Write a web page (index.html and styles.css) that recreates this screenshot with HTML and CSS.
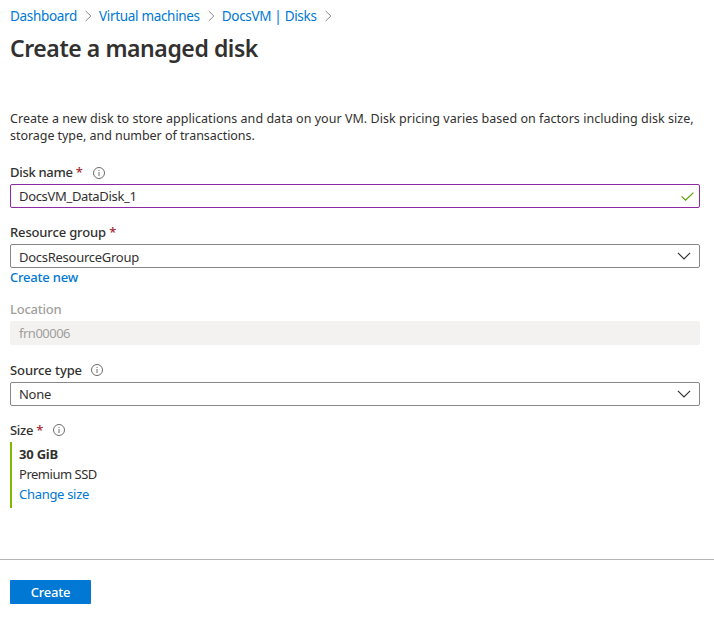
FILE: index.html
```html
<!DOCTYPE html>
<html lang="en">
<head>
<meta charset="utf-8">
<title>Create a managed disk</title>
<link rel="stylesheet" href="styles.css">
</head>
<body>
<svg class="defs" width="0" height="0" aria-hidden="true">
  <symbol id="sep" viewBox="0 0 7 12"><path d="M.7 1 5.9 6 .7 11"/></symbol>
  <symbol id="info" viewBox="0 0 12 12"><circle cx="6" cy="6" r="5.5"/><path d="M6 5v4M6 3v1"/></symbol>
  <symbol id="down" viewBox="0 0 14 8"><path d="M.9.8 7 6.9 13.1.8"/></symbol>
  <symbol id="check" viewBox="0 0 13 9"><path d="M.6 4.4 4.5 8.2 12.4.6"/></symbol>
</svg>
<main>
  <nav class="crumbs">
    <a>Dashboard</a><svg class="sep"><use href="#sep"/></svg>
    <a>Virtual machines</a><svg class="sep"><use href="#sep"/></svg>
    <a>DocsVM | Disks</a><svg class="sep"><use href="#sep"/></svg>
  </nav>
  <h1>Create a managed disk</h1>
  <p class="intro"><span class="lead">Create a new disk to store applications and data on your VM. Disk pricing varies based on factors including disk size,</span><br><span class="tail">storage type, and number of transactions.</span></p>
  <section class="field name">
    <div class="label">Disk name <b>*</b><svg class="info"><use href="#info"/></svg></div>
    <div class="box active"><span>DocsVM_DataDisk_1</span><svg class="check"><use href="#check"/></svg></div>
  </section>
  <section class="field group">
    <div class="label">Resource group <b>*</b></div>
    <div class="box"><span>DocsResourceGroup</span><svg class="down"><use href="#down"/></svg></div>
    <a class="new">Create new</a>
  </section>
  <section class="field location">
    <div class="label">Location</div>
    <div class="box disabled"><span>frn00006</span></div>
  </section>
  <section class="field source">
    <div class="label">Source type<svg class="info"><use href="#info"/></svg></div>
    <div class="box"><span>None</span><svg class="down"><use href="#down"/></svg></div>
  </section>
  <section class="field size">
    <div class="label">Size <b>*</b><svg class="info"><use href="#info"/></svg></div>
    <div class="summary"><strong>30 GiB</strong><span class="tier">Premium SSD</span><a>Change size</a></div>
  </section>
</main>
<footer><button>Create</button></footer>
</body>
</html>
```
FILE: styles.css
```css
* { box-sizing: border-box; }
body { margin: 0; height: 618px; display: flex; flex-direction: column; background: #fff; color: #323130; font: 13px/20px "Noto Sans", sans-serif; overflow: hidden; }
.defs { position: absolute; }
svg { fill: none; stroke: #6e6c6a; stroke-width: 1; flex: none; }
a { color: #0078d4; }
main { height: 559px; padding: 6px 14px 0 10px; }
.crumbs { display: flex; align-items: center; height: 20px; font-size: 13.5px; letter-spacing: -.32px; }
.sep { width: 7px; height: 12px; margin: 0 7px 0 8px; stroke: #8a8886; }
h1 { margin: 4px 0 0; font-size: 23px; line-height: 36px; font-weight: 600; letter-spacing: -.43px; }
.intro { margin: 44px 0 0; line-height: 17px; white-space: nowrap; font-size: 12.5px; }
.lead { letter-spacing: .037px; }
.tail { letter-spacing: -.05px; }
.field { display: flex; flex-direction: column; align-items: stretch; }
.label { display: flex; align-items: center; height: 20px; font-weight: 500; white-space: pre; letter-spacing: -.15px; }
.label b { color: #a4262c; font-weight: 500; }
.info { width: 12px; height: 12px; margin-left: 10px; }
.box { height: 24px; margin-top: 2px; border: 1px solid #8a8886; border-radius: 2px; display: flex; align-items: center; justify-content: space-between; padding: 0 8px; letter-spacing: -.27px; }
.active { border-color: #8e2aa5; letter-spacing: -.33px; }
.check { width: 13px; height: 9px; stroke: #57a300; stroke-width: 1.2; margin-right: -3px; }
.down { width: 14px; height: 8px; stroke: #323130; stroke-width: 1.15; }
.name { margin-top: 18px; }
.name .label { letter-spacing: -.3px; }
.name .info { margin-top: 1px; }
.group { margin-top: 14px; }
.group .box span { padding-top: 2px; }
.new { height: 20px; margin-top: -1px; font-weight: 500; letter-spacing: -.2px; }
.location { margin-top: 12px; color: #a19f9d; }
.location .label { letter-spacing: -.25px; }
.disabled { background: #f3f2f1; border-color: #f3f2f1; letter-spacing: -.5px; }
.source { margin-top: 15px; }
.source .label { letter-spacing: -.1px; }
.source .info { margin-left: 9px; }
.size { margin-top: 14px; }
.size .label { letter-spacing: -.3px; }
.summary { margin-top: 2px; border-left: 2px solid #7fba00; height: 66px; padding: 2px 0 0 7px; display: flex; flex-direction: column; letter-spacing: -.3px; }
.summary strong { letter-spacing: -.2px; }
.tier { letter-spacing: -.48px; }
footer { height: 59px; border-top: 1px solid #b5b5b5; padding: 20px 10px; }
button { display: block; width: 81px; height: 24px; padding: 0; border: 0; border-radius: 1px; background: #0078d4; color: #fff; font: 500 13px "Noto Sans", sans-serif; letter-spacing: -.25px; }
```
